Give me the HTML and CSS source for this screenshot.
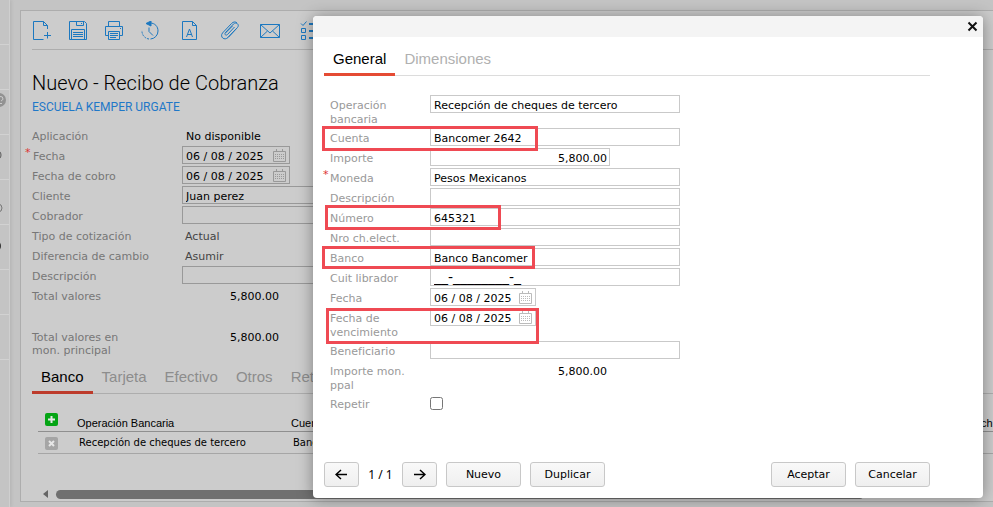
FILE: index.html
```html
<!DOCTYPE html>
<html lang="es">
<head>
<meta charset="utf-8">
<title>Recibo de Cobranza</title>
<link rel="stylesheet" href="styles.css">
</head>
<body>
<div class="app">
  <nav class="rail" aria-label="Menú">
    <span class="rail-item"></span>
    <span class="rail-item"></span>
    <span class="rail-item">
      <svg width="7" height="16" viewBox="0 0 7 16"><circle cx="-1" cy="8" r="7" fill="#929292"/><path d="M0 4.500Q3 4 3 7Q3 8 1 9M0 11.500H2" stroke="#ccc" fill="none"/></svg>
    </span>
    <span class="rail-item">
      <svg width="7" height="16" viewBox="0 0 7 16"><circle cx="-4" cy="7" r="5" fill="none" stroke="#555"/></svg>
    </span>
    <span class="rail-item">
      <svg width="7" height="16" viewBox="0 0 7 16"><circle cx="-2" cy="8" r="4" fill="none" stroke="#777"/></svg>
    </span>
    <span class="rail-item">
      <svg width="7" height="16" viewBox="0 0 7 16"><circle cx="-5" cy="8" r="6" fill="#333"/></svg>
    </span>
    <span class="rail-item"></span>
    <span class="rail-item"></span>
  </nav>

  <main class="panel">
    <div class="toolbar">
      <button class="tool" aria-label="Nuevo"><svg width="20" height="20" viewBox="0 0 20 20"><path d="M11.500 18.500H1.500V.5H11.500L15.500 4.500V8M11.500 .5V4.500H15.500M15.500 11V17.500M12 14.500H19"/></svg></button>
      <button class="tool" aria-label="Guardar"><svg width="20" height="20" viewBox="0 0 20 20"><path d="M1.500 .5H16.500L18.500 2.500V18.500H1.500ZM8.500 .5V4.500H15.500V.5M13.500 2V3M3.500 18V8.500H16.500V18M5 11.500H15M5 13.500H15M5 15.500H15"/></svg></button>
      <button class="tool" aria-label="Imprimir"><svg width="20" height="20" viewBox="0 0 20 20"><path d="M4.500 5V.5H15.500V5M4.500 14.500H1.500V5.500H18.500V14.500H15.500M4.500 10.500H15.500V18.500H4.500ZM6 12.500H14M6 14.500H14M6 16.500H12M16 7.500H17"/></svg></button>
      <button class="tool" aria-label="Historial"><svg width="20" height="20" viewBox="0 0 20 20"><path d="M10 2C15 2 18 5.500 18 10A8 8 0 0 1 10.500 18"/><path d="M9 18A8 8 0 0 1 2 9.500" stroke-dasharray="2 1"/><path d="M9 6.500V10.500L13 14.500"/><path d="M6 2.500L11 0V5Z" fill="#1c78c0"/></svg></button>
      <button class="tool" aria-label="Fuente"><svg width="20" height="20" viewBox="0 0 20 20"><path d="M2.500 .5H12.500L16.500 4.500V18.500H2.500ZM12.500 .5V4.500H16.500M6.500 16L9.500 8L12.500 16M7.500 13.500H11.500"/></svg></button>
      <button class="tool" aria-label="Adjuntar"><svg width="20" height="20" viewBox="0 0 20 20"><path d="M14.500 6L7.500 13.500C6 15 4 13.500 5.500 11.500L13.500 3C16 .5 20 3.500 17.500 6.500L8 16.500C4.500 20 -.5 16 2.500 12L11.500 2.500C13.500 .5 15.500 .5 17 2M12.500 5L5.500 12M16 8L8 16.500"/></svg></button>
      <button class="tool" aria-label="Correo"><svg width="20" height="20" viewBox="0 0 20 20"><path d="M.5 3.500H19.500V16.500H.5ZM.5 3.500L10 12L19.500 3.500M.5 16.500L7.500 10M19.500 16.500L12.500 10"/></svg></button>
      <button class="tool" aria-label="Lista"><svg width="20" height="20" viewBox="0 0 20 20"><path d="M1 2.500L3 4.500L6.500 .5M1.500 7.500H5.500V11.500H1.500ZM1.500 14.500H5.500V18.500H1.500Z"/><path d="M9 3H20M9 10H20M9 17H20" stroke-width="2"/></svg></button>
    </div>

    <h1 class="title">Nuevo - Recibo de Cobranza</h1>
    <a class="subtitle" href="#">ESCUELA KEMPER URGATE</a>

    <form class="form">
      <div class="row"><span class="label">Aplicación</span><span class="value">No disponible</span></div>
      <div class="row required"><label class="label" for="r-fecha">Fecha</label><span class="date"><input id="r-fecha" value="06 / 08 / 2025"><svg class="cal" width="13" height="13" viewBox="0 0 13 13"><path d="M.5 2.500H12.500V12.500H.5ZM3.500 0V3M9.500 0V3"/><path d="M2 5.500H11M2 7.500H11M2 9.500H11" stroke-dasharray="1 1"/></svg></span></div>
      <div class="row"><label class="label" for="r-cobro">Fecha de cobro</label><span class="date"><input id="r-cobro" value="06 / 08 / 2025"><svg class="cal" width="13" height="13" viewBox="0 0 13 13"><path d="M.5 2.500H12.500V12.500H.5ZM3.500 0V3M9.500 0V3"/><path d="M2 5.500H11M2 7.500H11M2 9.500H11" stroke-dasharray="1 1"/></svg></span></div>
      <div class="row"><label class="label" for="r-cliente">Cliente</label><input class="field" id="r-cliente" value="Juan perez"></div>
      <div class="row"><label class="label" for="r-cobrador">Cobrador</label><input class="field" id="r-cobrador"></div>
      <div class="row"><span class="label">Tipo de cotización</span><span class="value muted">Actual</span></div>
      <div class="row"><span class="label">Diferencia de cambio</span><span class="value muted">Asumir</span></div>
      <div class="row"><label class="label" for="r-desc">Descripción</label><input class="field" id="r-desc"></div>
      <div class="row total"><span class="label">Total valores</span><span class="value amount">5,800.00</span></div>
      <div class="row"><span class="label">Total valores en mon.&nbsp;principal</span><span class="value amount">5,800.00</span></div>
    </form>

    <div class="tabs">
      <button class="tab active">Banco</button>
      <button class="tab">Tarjeta</button>
      <button class="tab">Efectivo</button>
      <button class="tab">Otros</button>
      <button class="tab">Ret.</button>
    </div>

    <div class="grid-wrap">
      <table class="grid">
        <thead>
          <tr>
            <th class="c-act"><button class="mini add" aria-label="Agregar"><svg width="13" height="13" viewBox="0 0 13 13"><path d="M6.500 3V10M3 6.500H10"/></svg></button></th>
            <th class="c-op">Operación Bancaria</th>
            <th>Cuenta</th>
            <th class="c-last">ch</th>
          </tr>
        </thead>
        <tbody>
          <tr>
            <td><button class="mini del" aria-label="Quitar"><svg width="13" height="13" viewBox="0 0 13 13"><path d="M4 4L9 9M9 4L4 9"/></svg></button></td>
            <td>Recepción de cheques de tercero</td>
            <td>Bancomer 2642</td>
            <td></td>
          </tr>
        </tbody>
      </table>
      <div class="scroll"><span class="scroll-arrow"></span><span class="scroll-thumb"></span></div>
    </div>
  </main>
</div>

<section class="dialog" role="dialog" aria-label="General">
  <header class="dialog-head"><button class="close" aria-label="Cerrar"><svg width="11" height="11" viewBox="0 0 11 11"><path d="M1.500 1.500L9.500 9.500M9.500 1.500L1.500 9.500"/></svg></button></header>
  <div class="dialog-body">
    <div class="tabs">
      <button class="tab active">General</button>
      <button class="tab">Dimensiones</button>
    </div>
    <form class="form">
      <div class="row"><label class="label" for="d-op">Operación bancaria</label><input class="field" id="d-op" value="Recepción de cheques de tercero"></div>
      <div class="row"><label class="label" for="d-cuenta">Cuenta</label><input class="field" id="d-cuenta" value="Bancomer 2642"><span class="mark mark-cuenta"></span></div>
      <div class="row"><label class="label" for="d-importe">Importe</label><input class="field amount" id="d-importe" value="5,800.00"></div>
      <div class="row required"><label class="label" for="d-moneda">Moneda</label><input class="field" id="d-moneda" value="Pesos Mexicanos"></div>
      <div class="row"><label class="label" for="d-desc">Descripción</label><input class="field" id="d-desc"></div>
      <div class="row"><label class="label" for="d-num">Número</label><input class="field" id="d-num" value="645321"><span class="mark mark-numero"></span></div>
      <div class="row"><label class="label" for="d-nro">Nro ch.elect.</label><input class="field" id="d-nro"></div>
      <div class="row"><label class="label" for="d-banco">Banco</label><input class="field" id="d-banco" value="Banco Bancomer"><span class="mark mark-banco"></span></div>
      <div class="row"><label class="label" for="d-cuit">Cuit librador</label><input class="field masked" id="d-cuit" value="__-________-_"></div>
      <div class="row"><label class="label" for="d-fecha">Fecha</label><span class="date"><input id="d-fecha" value="06 / 08 / 2025"><svg class="cal" width="13" height="13" viewBox="0 0 13 13"><path d="M.5 2.500H12.500V12.500H.5ZM3.500 0V3M9.500 0V3"/><path d="M2 5.500H11M2 7.500H11M2 9.500H11" stroke-dasharray="1 1"/></svg></span></div>
      <div class="row"><label class="label" for="d-venc">Fecha de vencimiento</label><span class="date"><input id="d-venc" value="06 / 08 / 2025"><svg class="cal" width="13" height="13" viewBox="0 0 13 13"><path d="M.5 2.500H12.500V12.500H.5ZM3.500 0V3M9.500 0V3"/><path d="M2 5.500H11M2 7.500H11M2 9.500H11" stroke-dasharray="1 1"/></svg></span><span class="mark mark-venc"></span></div>
      <div class="row"><label class="label" for="d-benef">Beneficiario</label><input class="field" id="d-benef"></div>
      <div class="row"><span class="label">Importe mon. ppal</span><span class="value amount">5,800.00</span></div>
      <div class="row"><label class="label" for="d-rep">Repetir</label><input class="check" type="checkbox" id="d-rep"></div>
    </form>
    <footer class="actions">
      <button class="btn nav" aria-label="Anterior"><svg width="13" height="11" viewBox="0 0 13 11"><path d="M12 5.500H1M6 1L1 5.500L6 10"/></svg></button>
      <span class="pager">1 / 1</span>
      <button class="btn nav" aria-label="Siguiente"><svg width="13" height="11" viewBox="0 0 13 11"><path d="M1 5.500H12M7 1L12 5.500L7 10"/></svg></button>
      <button class="btn">Nuevo</button>
      <button class="btn">Duplicar</button>
      <button class="btn push">Aceptar</button>
      <button class="btn">Cancelar</button>
    </footer>
  </div>
</section>
</body>
</html>
```
FILE: styles.css
```css
* { box-sizing: border-box; }

body {
  margin: 0;
  min-height: 100vh;
  overflow: hidden;
  background: #c4c4c4;
  font: 11px/14px "DejaVu Sans", Verdana, sans-serif;
  color: #000;
}

button, input { font: inherit; color: inherit; margin: 0; }
button { border: 0; padding: 0; background: none; }
svg { display: block; fill: none; }

.app { display: flex; height: 100vh; }

.rail {
  flex: 0 0 10px;
  margin-right: 10px;
  border-right: 1px solid #cfcfcf;
  box-shadow: 2px 0 3px #b8b8b8;
}
.rail-item { display: block; height: 45px; padding-top: 13px; border-bottom: 1px solid #d2d2d2; }
.rail-item:nth-child(3) { padding-top: 2px; }
.rail-item:nth-child(5) { padding-top: 20px; }

.panel {
  flex: 1;
  min-width: 0;
  margin: 10px 0 5px;
  padding-left: 11px;
  border: 1px solid #adadad;
  border-right: 0;
  background: #ccc;
  overflow: hidden;
}

.toolbar { display: flex; gap: 16px; padding: 10px 0 8px; border-bottom: 1px solid #adadad; }
.tool { width: 20px; height: 20px; stroke: #1c78c0; }
.tool:nth-child(n+5) { margin-left: 4px; }

.title { margin: 20px 0 0; font: 300 20px/26px Roboto, sans-serif; }
.subtitle { display: block; margin: 3px 0 11px; font: 12px/16px Roboto, sans-serif; color: #1f78c8; text-decoration: none; }

.form { display: flex; flex-direction: column; gap: 2px; }
.row { position: relative; display: flex; align-items: flex-start; min-height: 18px; }
.label { flex: none; padding-top: 4px; margin-bottom: -1px; color: #999; }
.panel .label { width: 150px; padding-right: 24px; line-height: 13px; color: #777; }
.panel .required .label { padding-left: 1px; }
.dialog .label { width: 100px; padding-right: 10px; }
.required::before { content: "*"; position: absolute; left: -7px; top: 0; color: #d33; }
.value { padding: 4px 4px 0; }
.muted { padding-left: 3px; color: #444; }
.total { min-height: 39px; }

.field, .date { height: 18px; border: 1px solid #c9c9c9; background: transparent; }
.field { width: 250px; padding: 2px 3px 0; outline: 0; }
.panel .field, .panel .date { border-color: #999; }
.masked { padding-top: 0; font-size: 14px; }
.amount { width: 180px; padding-right: 2px; text-align: right; }
.value.amount { padding-right: 3px; }
.panel .value.amount { width: 100px; }
.date { display: flex; align-items: center; width: 106px; padding: 0 3px; }
.panel .date { width: 108px; }
.date input { flex: 1; width: 0; height: 16px; padding: 2px 0 0; border: 0; background: none; outline: 0; }
.cal { stroke: #bbb; }
.panel .cal { stroke: #999; }
.check { width: 13px; height: 13px; margin-top: 3px; }

.tabs { display: flex; border-bottom: 1px solid #dcdcdc; }
.tab { height: 32px; padding: 0 9px; margin-bottom: -1px; border-bottom: 3px solid transparent; font: 15px/20px "Liberation Sans", Arial, sans-serif; color: #b0b0b0; }
.tab.active { color: #000; border-color: #e54b34; }
.panel .tabs { margin-top: 6px; border-color: #adadad; }
.panel .tab { color: #8d8d8d; }
.panel .tab.active { color: #000; border-color: #bd3b2b; }

.grid-wrap { padding: 15px 0 0 6px; }
.grid { width: 100%; table-layout: fixed; border-collapse: collapse; }
.grid th { height: 22px; padding: 0; border-bottom: 1px solid #8f8f8f; text-align: left; vertical-align: bottom; font: 11px/16px "Liberation Sans", Arial, sans-serif; }
.grid td { height: 22px; padding: 2px 0 0 2px; border-bottom: 1px solid #a6a6a6; font-size: 10px; }
.grid .c-act { width: 39px; }
.grid .c-op { width: 214px; }
.grid .c-last { width: 12px; white-space: nowrap; }
.mini { display: block; width: 13px; height: 13px; margin-left: 7px; border-radius: 2px; stroke: #e6e6e6; }
.grid td .mini { margin-left: 5px; }
.mini svg { stroke-width: 2; }
.add { margin-bottom: 5px; background: #04a414; }
.del { background: #a5a5a5; }

.scroll { display: flex; align-items: center; gap: 8px; height: 11px; margin-top: 35px; padding-left: 5px; }
.scroll-arrow { border: 4px solid transparent; border-left: 0; border-right: 5px solid #666; }
.scroll-thumb { width: 85%; height: 9px; border-radius: 5px; background: #707070; }

.dialog {
  position: absolute;
  top: 16px;
  left: 313px;
  right: 10px;
  border-radius: 4px;
  background: #fff;
  box-shadow: 0 1px 16px rgba(0, 0, 0, .38);
}
.dialog-head { display: flex; justify-content: flex-end; height: 21px; padding: 5px 5px 0; border-radius: 4px 4px 0 0; background: #f4f4f4; }
.close { width: 11px; height: 11px; stroke: #111; }
.close svg { stroke-width: 2; }
.dialog-body { padding: 7px 53px 11px 11px; }
.dialog .form { margin: 19px 0 0 6px; }

.mark { position: absolute; z-index: 1; border: 3px solid #ef4a53; pointer-events: none; }
.mark-cuenta { top: -2px; left: -8px; width: 216px; height: 25px; }
.mark-numero { top: -3px; left: -5px; width: 176px; height: 25px; }
.mark-banco { top: -2px; left: -8px; width: 213px; height: 23px; }
.mark-venc { top: 0; left: -4px; width: 213px; height: 36px; }

.actions { display: flex; align-items: center; gap: 9px; margin-top: 50px; }
.btn { display: flex; align-items: center; justify-content: center; width: 75px; height: 25px; border: 1px solid #c8c8c8; border-radius: 3px; background: linear-gradient(#f9f9f9, #efefef); }
.nav { width: 35px; stroke: #000; }
.nav svg { stroke-width: 1.5; }
.pager { width: 25px; text-align: center; font: 12px/16px "Noto Sans", sans-serif; white-space: nowrap; }
.push { margin-left: auto; }
```
